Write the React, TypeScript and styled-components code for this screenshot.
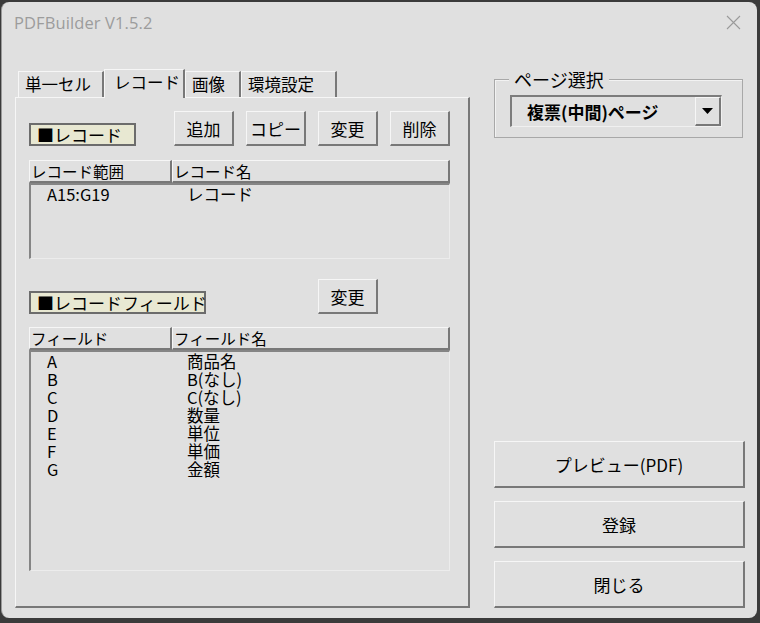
import React from "react";
import styled, { createGlobalStyle } from "styled-components";

const GlobalStyle = createGlobalStyle`
  html, body { margin: 0; padding: 0; }
  body {
    width: 760px;
    height: 623px;
    overflow: hidden;
    background: #3b3b3b;
    font-family: "Noto Sans CJK JP", "Noto Sans", sans-serif;
  }
  * { box-sizing: border-box; }
`;

const DARK = "#787878";
const LIGHT = "#f6f6f6";
const FACE = "#e0e0e0";

const Window = styled.div`
  margin: 2px 3px 0 1px;
  height: 616px;
  border-radius: 8px;
  background: ${FACE};
  display: flex;
  flex-direction: column;
  overflow: hidden;
  border-left: 1px solid #9a9a9a;
`;

const TitleBar = styled.div`
  height: 41px;
  flex: none;
  display: flex;
  align-items: center;
  justify-content: space-between;
  padding: 0 16px 0 12px;
`;

const Title = styled.span`
  font-family: "Open Sans", "Noto Sans", sans-serif;
  font-size: 16.5px;
  color: #9c9c9c;
  letter-spacing: 0.1px;
`;

const CloseIcon = styled.svg`
  width: 15px;
  height: 15px;
  display: block;
`;

const Body = styled.div`
  flex: 1;
  display: flex;
  gap: 24px;
  padding: 0 12px 10px 13px;
  min-height: 0;
`;

const LeftColumn = styled.div`
  width: 455px;
  display: flex;
  flex-direction: column;
  padding-top: 26px;
`;

const TabStrip = styled.div`
  height: 28px;
  display: flex;
  align-items: flex-end;
  padding-left: 3px;
  position: relative;
  z-index: 1;
`;

const Tab = styled.div<{ $active?: boolean; $w: number }>`
  width: ${(p) => p.$w}px;
  height: ${(p) => (p.$active ? 29 : 26)}px;
  margin-bottom: ${(p) => (p.$active ? -1 : 0)}px;
  background: ${FACE};
  border-top: 1px solid ${LIGHT};
  border-left: 1px solid ${LIGHT};
  border-right: 2px solid ${DARK};
  display: flex;
  align-items: center;
  padding-left: ${(p) => (p.$active ? 9 : 6)}px;
  padding-bottom: ${(p) => (p.$active ? 4 : 1)}px;
  font-size: 16.5px;
  color: #000;
  white-space: nowrap;
`;

const Panel = styled.div`
  flex: 1;
  border-top: 1px solid ${LIGHT};
  border-left: 1px solid ${LIGHT};
  border-right: 2px solid ${DARK};
  border-bottom: 2px solid ${DARK};
  padding: 13px 18px 0 13px;
  display: flex;
  flex-direction: column;
`;

const ToolRow = styled.div<{ $mt?: number }>`
  margin-top: ${(p) => p.$mt ?? 0}px;
  display: grid;
  grid-template-columns: minmax(0, 1fr) repeat(4, 60px);
  column-gap: 12px;
  align-items: end;
  height: 35px;
`;

const SectionLabel = styled.div<{ $w: number }>`
  grid-column: 1;
  width: ${(p) => p.$w}px;
  height: 23px;
  border: 2px solid #6c6c6c;
  background: #e8e8d2;
  display: flex;
  align-items: center;
  padding-left: 6px;
  font-size: 17px;
  color: #000;
  white-space: nowrap;
  line-height: 1;
`;

const SmallButton = styled.button<{ $col?: number }>`
  grid-column: ${(p) => p.$col ?? "auto"};
  height: 35px;
  width: 60px;
  padding: 0;
  background: ${FACE};
  border-top: 1px solid ${LIGHT};
  border-left: 1px solid ${LIGHT};
  border-right: 2px solid ${DARK};
  border-bottom: 2px solid ${DARK};
  font-family: "Noto Sans CJK JP", "Noto Sans", sans-serif;
  font-size: 17px;
  color: #000;
  display: flex;
  align-items: center;
  justify-content: center;
`;

const HeaderRow = styled.div<{ $mt: number }>`
  margin-top: ${(p) => p.$mt}px;
  height: 23px;
  display: grid;
  grid-template-columns: 143px 1fr;
`;

const HeaderCell = styled.div`
  background: ${FACE};
  border-top: 1px solid ${LIGHT};
  border-left: 1px solid ${LIGHT};
  border-right: 2px solid ${DARK};
  border-bottom: 2px solid ${DARK};
  font-size: 15.5px;
  line-height: 20px;
  padding-left: 1px;
  white-space: nowrap;
  color: #000;
`;

const ListBox = styled.div<{ $h: number }>`
  height: ${(p) => p.$h}px;
  border-top: 2px solid #858585;
  border-left: 2px solid #858585;
  border-right: 1px solid #ececec;
  border-bottom: 1px solid #ececec;
`;

const ListRow = styled.div`
  display: grid;
  grid-template-columns: 140px 1fr;
  height: 18px;
  line-height: 18px;
  font-size: 16.5px;
  padding-left: 16px;
  color: #000;
  white-space: nowrap;
`;

const RightColumn = styled.div`
  width: 251px;
  display: flex;
  flex-direction: column;
`;

const GroupBox = styled.div`
  position: relative;
  margin-top: 36px;
  width: 249px;
  border: 1px solid #a8a8a8;
  box-shadow: inset 1px 1px 0 #f2f2f2;
  padding: 15px 20px 10px 15px;
`;

const GroupLegend = styled.span`
  position: absolute;
  top: -13px;
  left: 14px;
  padding: 0 5px 0 5px;
  background: ${FACE};
  font-size: 18px;
  line-height: 24px;
  color: #000;
`;

const Combo = styled.div`
  height: 32px;
  border-top: 2px solid #7c7c7c;
  border-left: 2px solid #7c7c7c;
  border-right: 1px solid #f0f0f0;
  border-bottom: 1px solid #f0f0f0;
  display: flex;
  align-items: center;
  justify-content: space-between;
  padding-left: 15px;
`;

const ComboText = styled.span`
  font-size: 17px;
  font-weight: 700;
  color: #000;
`;

const ComboButton = styled.div`
  width: 26px;
  height: 29px;
  border-top: 1px solid ${LIGHT};
  border-left: 1px solid ${LIGHT};
  border-right: 2px solid ${DARK};
  border-bottom: 2px solid ${DARK};
  display: flex;
  align-items: center;
  justify-content: center;
`;

const ButtonStack = styled.div`
  margin-top: auto;
  display: flex;
  flex-direction: column;
  gap: 13px;
`;

const BigButton = styled.button`
  height: 47px;
  width: 251px;
  padding: 0;
  background: ${FACE};
  border-top: 1px solid ${LIGHT};
  border-left: 1px solid ${LIGHT};
  border-right: 2px solid ${DARK};
  border-bottom: 2px solid ${DARK};
  font-family: "Noto Sans CJK JP", "Noto Sans", sans-serif;
  font-size: 17px;
  color: #000;
`;

const records = [["A15:G19", "レコード"]];
const fields = [
  ["A", "商品名"],
  ["B", "B(なし)"],
  ["C", "C(なし)"],
  ["D", "数量"],
  ["E", "単位"],
  ["F", "単価"],
  ["G", "金額"],
];

export default function App() {
  return (
    <>
      <GlobalStyle />
      <Window>
        <TitleBar>
          <Title>PDFBuilder V1.5.2</Title>
          <CloseIcon viewBox="0 0 15 15">
            <path d="M1 1 L14 14 M14 1 L1 14" stroke="#9a9a9a" strokeWidth="1.1" fill="none" />
          </CloseIcon>
        </TitleBar>
        <Body>
          <LeftColumn>
            <TabStrip>
              <Tab $w={86}>単一セル</Tab>
              <Tab $w={81} $active>レコード</Tab>
              <Tab $w={56}>画像</Tab>
              <Tab $w={96}>環境設定</Tab>
            </TabStrip>
            <Panel>
              <ToolRow>
                <SectionLabel $w={107}>■レコード</SectionLabel>
                <SmallButton>追加</SmallButton>
                <SmallButton>コピー</SmallButton>
                <SmallButton>変更</SmallButton>
                <SmallButton>削除</SmallButton>
              </ToolRow>
              <HeaderRow $mt={14}>
                <HeaderCell>レコード範囲</HeaderCell>
                <HeaderCell>レコード名</HeaderCell>
              </HeaderRow>
              <ListBox $h={76}>
                {records.map(([a, b]) => (
                  <ListRow key={a}>
                    <span>{a}</span>
                    <span>{b}</span>
                  </ListRow>
                ))}
              </ListBox>
              <ToolRow $mt={20}>
                <SectionLabel $w={177}>■レコードフィールド</SectionLabel>
                <SmallButton $col={4}>変更</SmallButton>
              </ToolRow>
              <HeaderRow $mt={13}>
                <HeaderCell>フィールド</HeaderCell>
                <HeaderCell>フィールド名</HeaderCell>
              </HeaderRow>
              <ListBox $h={221}>
                {fields.map(([a, b]) => (
                  <ListRow key={a}>
                    <span>{a}</span>
                    <span>{b}</span>
                  </ListRow>
                ))}
              </ListBox>
            </Panel>
          </LeftColumn>
          <RightColumn>
            <GroupBox>
              <GroupLegend>ページ選択</GroupLegend>
              <Combo>
                <ComboText>複票(中間)ページ</ComboText>
                <ComboButton>
                  <svg width="11" height="6" viewBox="0 0 11 6">
                    <path d="M0 0 H11 L5.5 6 Z" fill="#000" />
                  </svg>
                </ComboButton>
              </Combo>
            </GroupBox>
            <ButtonStack>
              <BigButton>プレビュー(PDF)</BigButton>
              <BigButton>登録</BigButton>
              <BigButton>閉じる</BigButton>
            </ButtonStack>
          </RightColumn>
        </Body>
      </Window>
    </>
  );
}
